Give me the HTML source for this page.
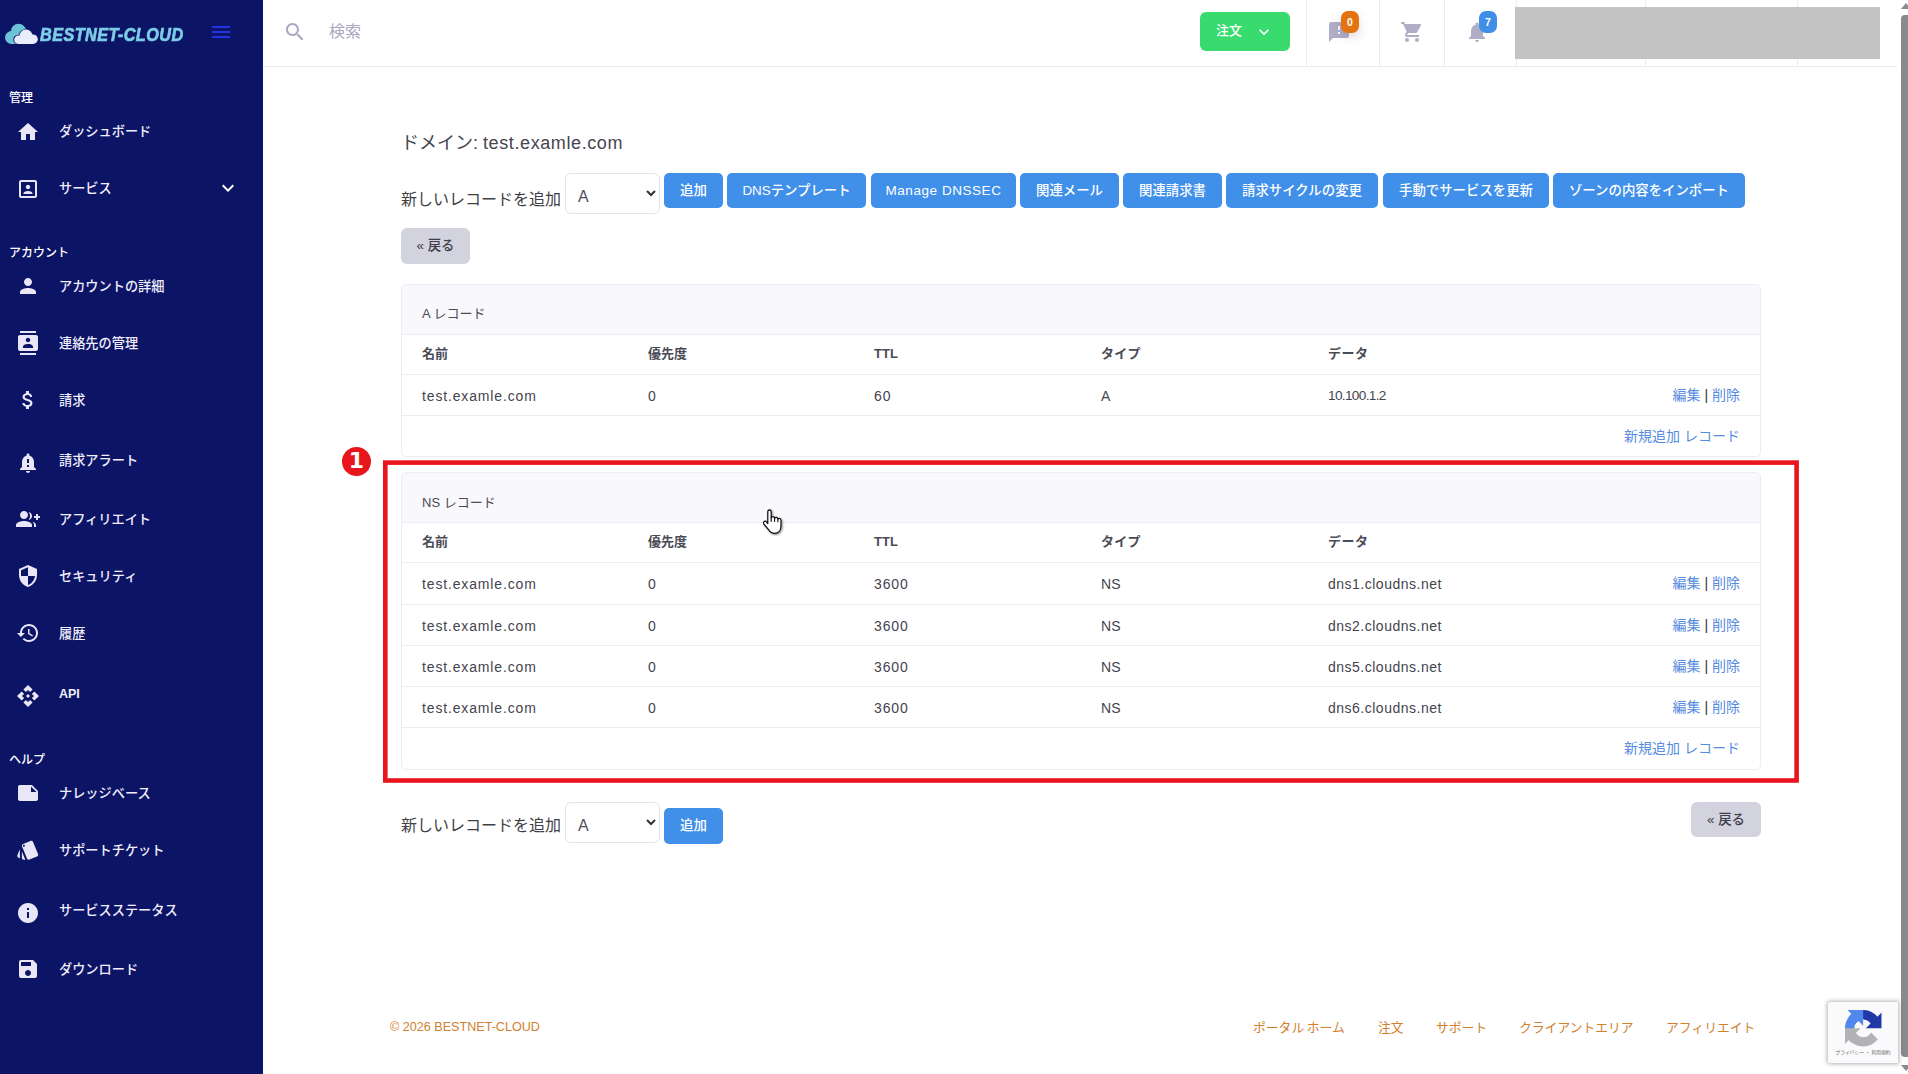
<!DOCTYPE html>
<html lang="ja">
<head>
<meta charset="utf-8">
<title>BESTNET-CLOUD</title>
<style>
*{box-sizing:border-box;margin:0;padding:0}
html,body{width:1908px;height:1074px;overflow:hidden;background:#fff}
body{font-family:"Liberation Sans","Noto Sans CJK JP",sans-serif;color:#3c3c46;position:relative}
.abs{position:absolute}
/* sidebar */
#side{position:absolute;left:0;top:0;width:263px;height:1074px;background:#0c1466;color:#fff}
#side .sec{position:absolute;left:9px;font-size:12px;line-height:16px;color:#fff;font-weight:500}
#side .it{position:absolute;left:59px;font-size:13.200px;line-height:20px;color:#f1eefc;white-space:nowrap;font-weight:500}
#side svg.ic{position:absolute;left:16px;width:24px;height:24px;fill:#e9e6f7}
#logo{position:absolute;left:40px;top:23px;font-size:18px;line-height:24px;font-weight:700;font-style:italic;color:#7ccde6;-webkit-text-stroke:.7px #7ccde6;white-space:nowrap;transform-origin:0 50%;transform:scaleX(.9);letter-spacing:.5px}
/* topbar */
#top{position:absolute;left:263px;top:0;width:1634px;height:67px;background:#fff;border-bottom:1px solid #e9e9ef}
.vd{position:absolute;top:0;width:1px;height:66px;background:#ececf1}
#order{position:absolute;left:1200px;top:12px;width:90px;height:39px;background:#39db6f;border-radius:6px;color:#fff;font-size:14px;line-height:39px}
.badge{position:absolute;height:22px;width:18px;border-radius:7px;color:#fff;font-size:10.500px;line-height:22px;text-align:center;font-weight:700}
/* main */
.h1{position:absolute;left:401px;top:130px;font-size:18px;line-height:26px;color:#45454f;white-space:nowrap}
.lbl{position:absolute;left:401px;font-size:16px;line-height:26px;color:#3f3f48;white-space:nowrap}
.sel{position:absolute;width:95px;height:41px;border:1px solid #e3e3ea;border-radius:6px;background:#fff;font-size:16px;line-height:46px;padding-left:12px;color:#50505a}
.btn{position:absolute;height:35px;border-radius:5px;background:#4090ea;color:#fff;font-size:13.400px;font-weight:500;line-height:35px;text-align:center;white-space:nowrap;overflow:hidden}
.btn.gray{background:#d2d3df;color:#3e3e48;border-radius:6px}
.card{position:absolute;left:401px;width:1360px;border:1px solid #ececf2;border-radius:5px;background:#fff;overflow:hidden}
.card .hd{height:49px;background:#f9f8fd;border-bottom:1px solid #ececf2;font-size:13px;line-height:20px;padding:18px 0 0 20px;color:#4a4a55}
.row{position:relative;border-bottom:1px solid #ececf2;font-size:14px;color:#44444e;letter-spacing:.85px}
.row.th,.row .act{letter-spacing:0}
.row:not(.th) span:not(.act){top:1px}
.row span{position:absolute;top:0;white-space:nowrap}
.row.th{font-weight:700;font-size:13px;color:#4b4b56}
.c1{left:20px}.c2{left:246px}.c3{left:472px}.c4{left:699px;letter-spacing:.2px}.c5{left:926px;letter-spacing:.5px}
.act{right:20px;color:#588ce0}
.act b{font-weight:400;color:#33333c}
.foot{position:absolute;font-size:12.800px;line-height:20px;color:#d0802f;white-space:nowrap}
</style>
</head>
<body>
<div id="side">
  <svg class="abs" style="left:4px;top:22px" width="36" height="24" viewBox="0 0 36 24">
    <g fill="#6cc2d6"><circle cx="14.500" cy="9.500" r="7.700"/><circle cx="7.500" cy="15.500" r="6.500"/><circle cx="22" cy="13" r="5.500"/><rect x="7.500" y="14" width="14" height="8"/></g>
    <g fill="#0c1466"><circle cx="21.600" cy="14.200" r="7"/><circle cx="14.100" cy="17.700" r="4.800"/></g>
    <g fill="#e9eefc"><circle cx="22" cy="14.200" r="6.600"/><circle cx="29" cy="17.200" r="4.800"/><circle cx="14.500" cy="17.700" r="4.300"/><rect x="14.500" y="16" width="14.500" height="6"/></g>
  </svg>
  <div id="logo">BESTNET-CLOUD</div>
  <svg class="abs" style="left:209px;top:20px;fill:#2136e2" width="24" height="24" viewBox="0 0 24 24"><path d="M3 18h18v-2H3v2zm0-5h18v-2H3v2zm0-7v2h18V6H3z"/></svg>

  <div class="sec" style="top:90px">管理</div>
  <svg class="ic" style="top:120px" viewBox="0 0 24 24"><path d="M10 20v-6h4v6h5v-8h3L12 3 2 12h3v8z"/></svg>
  <div class="it" style="top:122px">ダッシュボード</div>
  <svg class="ic" style="top:177px" viewBox="0 0 24 24"><path d="M12 12.250c1.240 0 2.250-1.010 2.250-2.250S13.240 7.750 12 7.750 9.750 8.760 9.750 10s1.010 2.250 2.250 2.250zm4.500 4c0-1.500-3-2.250-4.500-2.250s-4.500.750-4.500 2.250V17h9v-.750zM19 3H5c-1.100 0-2 .9-2 2v14c0 1.100.9 2 2 2h14c1.100 0 2-.9 2-2V5c0-1.100-.9-2-2-2zm0 16H5V5h14v14z"/></svg>
  <div class="it" style="top:179px">サービス</div>
  <svg class="abs" style="left:216px;top:176px;fill:#fff" width="24" height="24" viewBox="0 0 24 24"><path d="M16.590 8.590L12 13.170 7.410 8.590 6 10l6 6 6-6z"/></svg>

  <div class="sec" style="top:245px">アカウント</div>
  <svg class="ic" style="top:274px" viewBox="0 0 24 24"><path d="M12 12c2.210 0 4-1.790 4-4s-1.790-4-4-4-4 1.790-4 4 1.790 4 4 4zm0 2c-2.670 0-8 1.340-8 4v2h16v-2c0-2.660-5.330-4-8-4z"/></svg>
  <div class="it" style="top:277px">アカウントの詳細</div>
  <svg class="ic" style="top:331px" viewBox="0 0 24 24"><path d="M20 0H4v2h16V0zM4 24h16v-2H4v2zM20 4H4c-1.100 0-2 .9-2 2v12c0 1.100.9 2 2 2h16c1.100 0 2-.9 2-2V6c0-1.100-.9-2-2-2zm-8 2.750c1.240 0 2.250 1.010 2.250 2.250s-1.010 2.250-2.250 2.250S9.750 10.240 9.750 9 10.760 6.750 12 6.750zM17 17H7v-1.500c0-1.670 3.330-2.500 5-2.500s5 .830 5 2.500V17z"/></svg>
  <div class="it" style="top:334px">連絡先の管理</div>
  <svg class="ic" style="top:388px" viewBox="0 0 24 24"><path d="M11.800 10.900c-2.270-.590-3-1.200-3-2.150 0-1.090 1.010-1.850 2.700-1.850 1.780 0 2.440.850 2.500 2.100h2.210c-.070-1.720-1.120-3.300-3.210-3.810V3h-3v2.160c-1.940.420-3.500 1.680-3.500 3.610 0 2.310 1.910 3.460 4.700 4.130 2.500.6 3 1.480 3 2.410 0 .690-.490 1.790-2.700 1.790-2.060 0-2.870-.920-2.980-2.100h-2.200c.120 2.190 1.760 3.420 3.680 3.830V21h3v-2.150c1.950-.370 3.500-1.500 3.500-3.550 0-2.840-2.430-3.810-4.700-4.400z"/></svg>
  <div class="it" style="top:391px">請求</div>
  <svg class="ic" style="top:451px" viewBox="0 0 24 24"><path d="M18 16v-5c0-3.070-1.640-5.640-4.500-6.320V4c0-.830-.670-1.500-1.500-1.500s-1.500.670-1.500 1.500v.680C7.630 5.360 6 7.920 6 11v5l-2 2v1h16v-1l-2-2zm-5 0h-2v-2h2v2zm0-4h-2V8h2v4zm-1 10c1.100 0 2-.9 2-2h-4c0 1.100.890 2 2 2z"/></svg>
  <div class="it" style="top:451px">請求アラート</div>
  <svg class="ic" style="top:507px" viewBox="0 0 24 24"><path d="M22 9V7h-2v2h-2v2h2v2h2v-2h2V9h-2zM8 12c2.210 0 4-1.790 4-4s-1.790-4-4-4-4 1.790-4 4 1.790 4 4 4zm0 2c-2.670 0-8 1.340-8 4v2h16v-2c0-2.660-5.330-4-8-4zm4.510-8.950C13.430 6.110 14 7.490 14 9s-.570 2.890-1.490 3.950C14.470 12.700 16 11.040 16 9s-1.530-3.700-3.490-3.950zm4.020 9.780C17.420 15.650 18 16.710 18 18v2h2v-2c0-1.460-1.600-2.530-3.470-3.170z"/></svg>
  <div class="it" style="top:510px">アフィリエイト</div>
  <svg class="ic" style="top:564px" viewBox="0 0 24 24"><path d="M12 1L3 5v6c0 5.550 3.840 10.740 9 12 5.160-1.260 9-6.450 9-12V5l-9-4zm0 10.990h7c-.530 4.120-3.280 7.790-7 8.940V12H5V6.300l7-3.110v8.800z"/></svg>
  <div class="it" style="top:567px">セキュリティ</div>
  <svg class="ic" style="top:621px" viewBox="0 0 24 24"><path d="M13 3c-4.970 0-9 4.030-9 9H1l3.890 3.890.070.140L9 12H6c0-3.870 3.130-7 7-7s7 3.130 7 7-3.130 7-7 7c-1.930 0-3.680-.790-4.940-2.060l-1.420 1.420C8.270 19.990 10.510 21 13 21c4.970 0 9-4.030 9-9s-4.030-9-9-9zm-1 5v5l4.280 2.540.720-1.210-3.500-2.080V8H12z"/></svg>
  <div class="it" style="top:624px">履歴</div>
  <svg class="ic" style="top:684px" viewBox="0 0 24 24"><path d="M14 12l-2 2-2-2 2-2 2 2zm-2-6l2.120 2.120 2.500-2.500L12 1 7.380 5.620l2.500 2.500L12 6zm-6 6l2.120-2.120-2.500-2.500L1 12l4.620 4.620 2.500-2.500L6 12zm12 0l-2.120 2.120 2.500 2.500L23 12l-4.620-4.620-2.500 2.500L18 12zm-6 6l-2.120-2.120-2.500 2.500L12 23l4.620-4.620-2.500-2.500L12 18z"/></svg>
  <div class="it" style="top:684px;font-weight:700;font-size:12.500px">API</div>

  <div class="sec" style="top:752px">ヘルプ</div>
  <svg class="ic" style="top:781px" viewBox="0 0 24 24"><path d="M22 10l-6-6H4c-1.100 0-2 .9-2 2v12.010c0 1.100.9 1.990 2 1.990l16-.010c1.100 0 2-.890 2-1.990v-8zm-7-4.500l5.500 5.500H15V5.500z"/></svg>
  <div class="it" style="top:784px">ナレッジベース</div>
  <svg class="ic" style="top:838px" viewBox="0 0 24 24"><path d="M2.530 19.650l1.340.560v-9.030l-2.430 5.860c-.410 1.020.080 2.190 1.090 2.610zm19.500-3.700L17.070 3.980c-.310-.750-1.040-1.210-1.810-1.230-.260 0-.530.040-.790.150L7.100 5.950c-.750.310-1.210 1.030-1.230 1.800-.010.270.040.540.150.8l4.960 11.970c.310.760 1.050 1.220 1.830 1.230.260 0 .520-.050.770-.150l7.360-3.050c1.020-.420 1.510-1.590 1.090-2.600zM7.880 8.750c-.550 0-1-.450-1-1s.450-1 1-1 1 .450 1 1-.450 1-1 1zm-2 11c0 1.100.9 2 2 2h1.450l-3.450-8.340v6.340z"/></svg>
  <div class="it" style="top:841px">サポートチケット</div>
  <svg class="ic" style="top:901px" viewBox="0 0 24 24"><path d="M12 2C6.480 2 2 6.480 2 12s4.480 10 10 10 10-4.480 10-10S17.520 2 12 2zm1 15h-2v-6h2v6zm0-8h-2V7h2v2z"/></svg>
  <div class="it" style="top:901px">サービスステータス</div>
  <svg class="ic" style="top:957px" viewBox="0 0 24 24"><path d="M17 3H5c-1.110 0-2 .9-2 2v14c0 1.100.890 2 2 2h14c1.100 0 2-.9 2-2V7l-4-4zm-5 16c-1.660 0-3-1.340-3-3s1.340-3 3-3 3 1.340 3 3-1.340 3-3 3zm3-10H5V5h10v4z"/></svg>
  <div class="it" style="top:960px">ダウンロード</div>
</div>
<div id="top">
  <svg class="abs" style="left:20px;top:20px;fill:#a9a8c2" width="24" height="24" viewBox="0 0 24 24"><path d="M15.500 14h-.790l-.280-.270C15.410 12.590 16 11.110 16 9.500 16 5.910 13.090 3 9.500 3S3 5.910 3 9.500 5.910 16 9.500 16c1.610 0 3.090-.590 4.230-1.570l.270.280v.790l5 4.990L20.490 19l-4.990-5zm-6 0C7.010 14 5 11.990 5 9.500S7.010 5 9.500 5 14 7.010 14 9.500 11.990 14 9.500 14z"/></svg>
  <div class="abs" style="left:66px;top:21px;font-size:16px;line-height:22px;color:#a9a8c0">検索</div>
</div>
<div class="vd" style="left:1306px"></div>
<div class="vd" style="left:1379px"></div>
<div class="vd" style="left:1444px"></div>
<div class="vd" style="left:1516px"></div>
<div class="vd" style="left:1645px"></div>
<div class="vd" style="left:1797px"></div>
<div id="order"><span class="abs" style="left:16px;top:-1px;font-weight:500;font-size:13px">注文</span>
  <svg class="abs" style="left:54px;top:10px;fill:#fff" width="20" height="20" viewBox="0 0 24 24"><path d="M16.590 8.590L12 13.170 7.410 8.590 6 10l6 6 6-6z"/></svg></div>
<svg class="abs" style="left:1327px;top:20px;fill:#afaec6" width="24" height="24" viewBox="0 0 24 24"><path d="M20 2H4c-1.100 0-1.990.9-1.990 2L2 22l4-4h14c1.100 0 2-.9 2-2V4c0-1.100-.9-2-2-2zm-7 12h-2v-2h2v2zm0-4h-2V6h2v4z"/></svg>
<div class="badge" style="left:1341px;top:11px;background:#e2730d;box-shadow:0 4px 10px rgba(120,100,140,.25)">0</div>
<svg class="abs" style="left:1400px;top:20px;fill:#afaec6" width="24" height="24" viewBox="0 0 24 24"><path d="M7 18c-1.100 0-1.990.9-1.990 2S5.900 22 7 22s2-.9 2-2-.9-2-2-2zM1 2v2h2l3.600 7.590-1.350 2.450c-.160.280-.250.610-.250.960 0 1.100.9 2 2 2h12v-2H7.420c-.140 0-.250-.110-.250-.250l.030-.120.9-1.630h7.450c.750 0 1.410-.410 1.750-1.030l3.580-6.490c.080-.140.120-.310.120-.480 0-.550-.450-1-1-1H5.210l-.940-2H1zm16 16c-1.100 0-1.990.9-1.990 2s.890 2 1.990 2 2-.9 2-2-.9-2-2-2z"/></svg>
<svg class="abs" style="left:1465px;top:20px;fill:#afaec6" width="24" height="24" viewBox="0 0 24 24"><path d="M12 22c1.100 0 2-.9 2-2h-4c0 1.100.890 2 2 2zm6-6v-5c0-3.070-1.640-5.640-4.500-6.320V4c0-.830-.670-1.500-1.500-1.500s-1.500.670-1.500 1.500v.680C7.630 5.360 6 7.920 6 11v5l-2 2v1h16v-1l-2-2z"/></svg>
<div class="badge" style="left:1479px;top:11px;background:#3f8fe8">7</div>
<div class="abs" style="left:1515px;top:7px;width:365px;height:52px;background:#c3c3c3"></div>
<!-- scrollbar -->
<div class="abs" style="left:1897px;top:0;width:11px;height:1074px;background:#fff"></div>
<div class="abs" style="left:1901px;top:15px;width:9px;height:1042px;background:#8a898c;border-radius:4px 0 0 4px"></div>
<div class="abs" style="left:1901px;top:3px;width:0;height:0;border-left:5px solid transparent;border-right:5px solid transparent;border-bottom:6px solid #8a898c"></div>
<div class="abs" style="left:1901px;top:1065px;width:0;height:0;border-left:5px solid transparent;border-right:5px solid transparent;border-top:6px solid #8a898c"></div>
<div id="main">
  <div class="h1">ドメイン: <span style="letter-spacing:.6px">test.examle.com</span></div>
  <div class="lbl" style="top:187px">新しいレコードを追加</div>
  <div class="sel" style="left:565px;top:173px">A<svg class="abs" style="right:2px;top:13px" width="12" height="12" viewBox="0 0 12 12"><path d="M2 4l4 4 4-4" fill="none" stroke="#333" stroke-width="2"/></svg></div>
  <div class="btn" style="left:664px;top:173px;width:59px">追加</div>
  <div class="btn" style="left:727px;top:173px;width:139px">DNSテンプレート</div>
  <div class="btn" style="left:871px;top:173px;width:145px;font-size:13.500px;letter-spacing:.55px">Manage DNSSEC</div>
  <div class="btn" style="left:1020px;top:173px;width:99px">関連メール</div>
  <div class="btn" style="left:1123px;top:173px;width:99px">関連請求書</div>
  <div class="btn" style="left:1226px;top:173px;width:152px">請求サイクルの変更</div>
  <div class="btn" style="left:1383px;top:173px;width:166px">手動でサービスを更新</div>
  <div class="btn" style="left:1553px;top:173px;width:192px">ゾーンの内容をインポート</div>
  <div class="btn gray" style="left:401px;top:228px;width:69px;height:36px;line-height:36px">« 戻る</div>

  <div class="card" style="top:284px;height:173px">
    <div class="hd" style="height:50px;padding-top:19px">A レコード</div>
    <div class="row th" style="height:40px;line-height:38px"><span class="c1">名前</span><span class="c2">優先度</span><span class="c3">TTL</span><span class="c4">タイプ</span><span class="c5">データ</span></div>
    <div class="row" style="height:41px;line-height:40px"><span class="c1">test.examle.com</span><span class="c2">0</span><span class="c3">60</span><span class="c4">A</span><span class="c5" style="font-size:13.600px;letter-spacing:-.65px">10.100.1.2</span><span class="act">編集 <b>|</b> 削除</span></div>
    <div class="row" style="height:40px;line-height:40px;border:0"><span class="act">新規追加 レコード</span></div>
  </div>

  <div class="card" style="top:472px;height:298px">
    <div class="hd" style="height:50px;padding-top:20px">NS レコード</div>
    <div class="row th" style="height:40px;line-height:38px"><span class="c1">名前</span><span class="c2">優先度</span><span class="c3">TTL</span><span class="c4">タイプ</span><span class="c5">データ</span></div>
    <div class="row" style="height:42px;line-height:41px"><span class="c1">test.examle.com</span><span class="c2">0</span><span class="c3">3600</span><span class="c4">NS</span><span class="c5">dns1.cloudns.net</span><span class="act">編集 <b>|</b> 削除</span></div>
    <div class="row" style="height:41px;line-height:40px"><span class="c1">test.examle.com</span><span class="c2">0</span><span class="c3">3600</span><span class="c4">NS</span><span class="c5">dns2.cloudns.net</span><span class="act">編集 <b>|</b> 削除</span></div>
    <div class="row" style="height:41px;line-height:40px"><span class="c1">test.examle.com</span><span class="c2">0</span><span class="c3">3600</span><span class="c4">NS</span><span class="c5">dns5.cloudns.net</span><span class="act">編集 <b>|</b> 削除</span></div>
    <div class="row" style="height:41px;line-height:40px"><span class="c1">test.examle.com</span><span class="c2">0</span><span class="c3">3600</span><span class="c4">NS</span><span class="c5">dns6.cloudns.net</span><span class="act">編集 <b>|</b> 削除</span></div>
    <div class="row" style="height:40px;line-height:40px;border:0"><span class="act">新規追加 レコード</span></div>
  </div>

  <!-- annotation -->
  <svg class="abs" style="left:380px;top:456px" width="1424" height="332" viewBox="380 456 1424 332"><rect x="385.300" y="462.600" width="1411.300" height="317.900" fill="none" stroke="#e8151d" stroke-width="4.600"/></svg>
  <div class="abs" style="left:342px;top:447px;width:29px;height:29px;border-radius:50%;background:#e8151d;color:#fff;font-weight:700;font-size:22px;line-height:28px;text-align:center;font-family:'DejaVu Sans','Liberation Sans',sans-serif">1</div>

  <div class="lbl" style="top:813px">新しいレコードを追加</div>
  <div class="sel" style="left:565px;top:802px">A<svg class="abs" style="right:2px;top:13px" width="12" height="12" viewBox="0 0 12 12"><path d="M2 4l4 4 4-4" fill="none" stroke="#333" stroke-width="2"/></svg></div>
  <div class="btn" style="left:664px;top:808px;width:59px;height:36px;line-height:36px">追加</div>
  <div class="btn gray" style="left:1691px;top:802px;width:70px">« 戻る</div>

  <div class="foot" style="left:390px;top:1017px;font-size:12.600px">© 2026 BESTNET-CLOUD</div>
  <div class="foot" style="left:1253px;top:1018px;word-spacing:-1px">ポータル ホーム</div>
  <div class="foot" style="left:1378px;top:1018px">注文</div>
  <div class="foot" style="left:1436px;top:1018px">サポート</div>
  <div class="foot" style="left:1519px;top:1018px">クライアントエリア</div>
  <div class="foot" style="left:1666px;top:1018px">アフィリエイト</div>

  <!-- cursor -->
  <svg class="abs" style="left:761px;top:508px;filter:drop-shadow(1px 1px 1px rgba(0,0,0,.45))" width="24.500" height="30" preserveAspectRatio="none" viewBox="-2 -2 26 30"><path d="M5.200 1.800C5.200.6 6.200 0 7 0c.9 0 1.800.6 1.800 1.800V8c.4-.8 1-1.400 1.800-1.400 1 0 1.700.7 1.800 1.600.4-.6 1-.9 1.700-.9 1 0 1.700.7 1.800 1.700.4-.4.9-.6 1.500-.6 1.100 0 1.800.8 1.800 1.900V16c0 4.500-2.700 7.400-6.700 7.400-3 0-4.900-1.400-6.500-3.800L1.200 14.200C.3 13.100.5 12 1.300 11.500c.9-.6 2-.3 2.700.6l1.200 1.500z" fill="#fff" stroke="#10101a" stroke-width="1.300" stroke-linejoin="round"/><path d="M8.800 8v3.500M12.400 8.200v3.300M15.900 9v2.800" stroke="#10101a" stroke-width="1.200" fill="none" stroke-linecap="round"/></svg>

  <!-- recaptcha -->
  <div class="abs" style="left:1828px;top:1002px;width:70px;height:61px;background:#faf9fb;border-radius:2px 0 0 2px;box-shadow:0 0 4px 1px rgba(0,0,0,.3)">
    <svg class="abs" style="left:17px;top:8px" width="36.500" height="36.500" viewBox="0 0 64 64">
      <path d="M64 31.955c0-.46-.012-.918-.033-1.374V4.577l-7.190 7.190C50.894 4.566 41.944-.034 31.920-.034 21.490-.034 12.220 4.946 6.362 12.657l11.784 11.909c1.155-2.136 2.796-3.970 4.773-5.362 2.056-1.604 4.969-2.916 9-2.916.487 0 .863.057 1.139.164 4.995.394 9.324 3.151 11.874 7.152l-8.341 8.341c10.566-.041 22.500-.066 27.400.005" fill="#2338a8"/>
      <path d="M31.862.034c-.46.002-.918.012-1.374.033H4.484l7.190 7.190C4.473 13.140-.127 22.090-.127 32.114c0 10.430 4.980 19.700 12.690 25.557L24.472 45.890c-2.136-1.155-3.970-2.796-5.362-4.773-1.604-2.056-2.916-4.969-2.916-9 0-.487.057-.863.164-1.139.394-4.995 3.151-9.324 7.152-11.874l8.341 8.341c-.041-10.566-.066-22.500.005-27.400" fill="#5088ee"/>
      <path d="M-.127 32.114c.002.46.012.918.033 1.374v26.004l7.190-7.190c5.883 7.201 14.833 11.801 24.857 11.801 10.430 0 19.700-4.980 25.557-12.690L45.726 39.503c-1.155 2.136-2.796 3.970-4.773 5.362-2.056 1.604-4.969 2.916-9 2.916-.487 0-.863-.057-1.139-.164-4.995-.394-9.324-3.151-11.874-7.152l8.341-8.341c-10.566.041-22.500.066-27.400-.005" fill="#b3b3b6"/>
    </svg>
    <div class="abs" style="left:0;top:47px;width:70px;text-align:center;font-size:4.800px;line-height:8px;color:#666;white-space:nowrap">プライバシー ・ 利用規約</div>
  </div>
</div>
</body>
</html>
